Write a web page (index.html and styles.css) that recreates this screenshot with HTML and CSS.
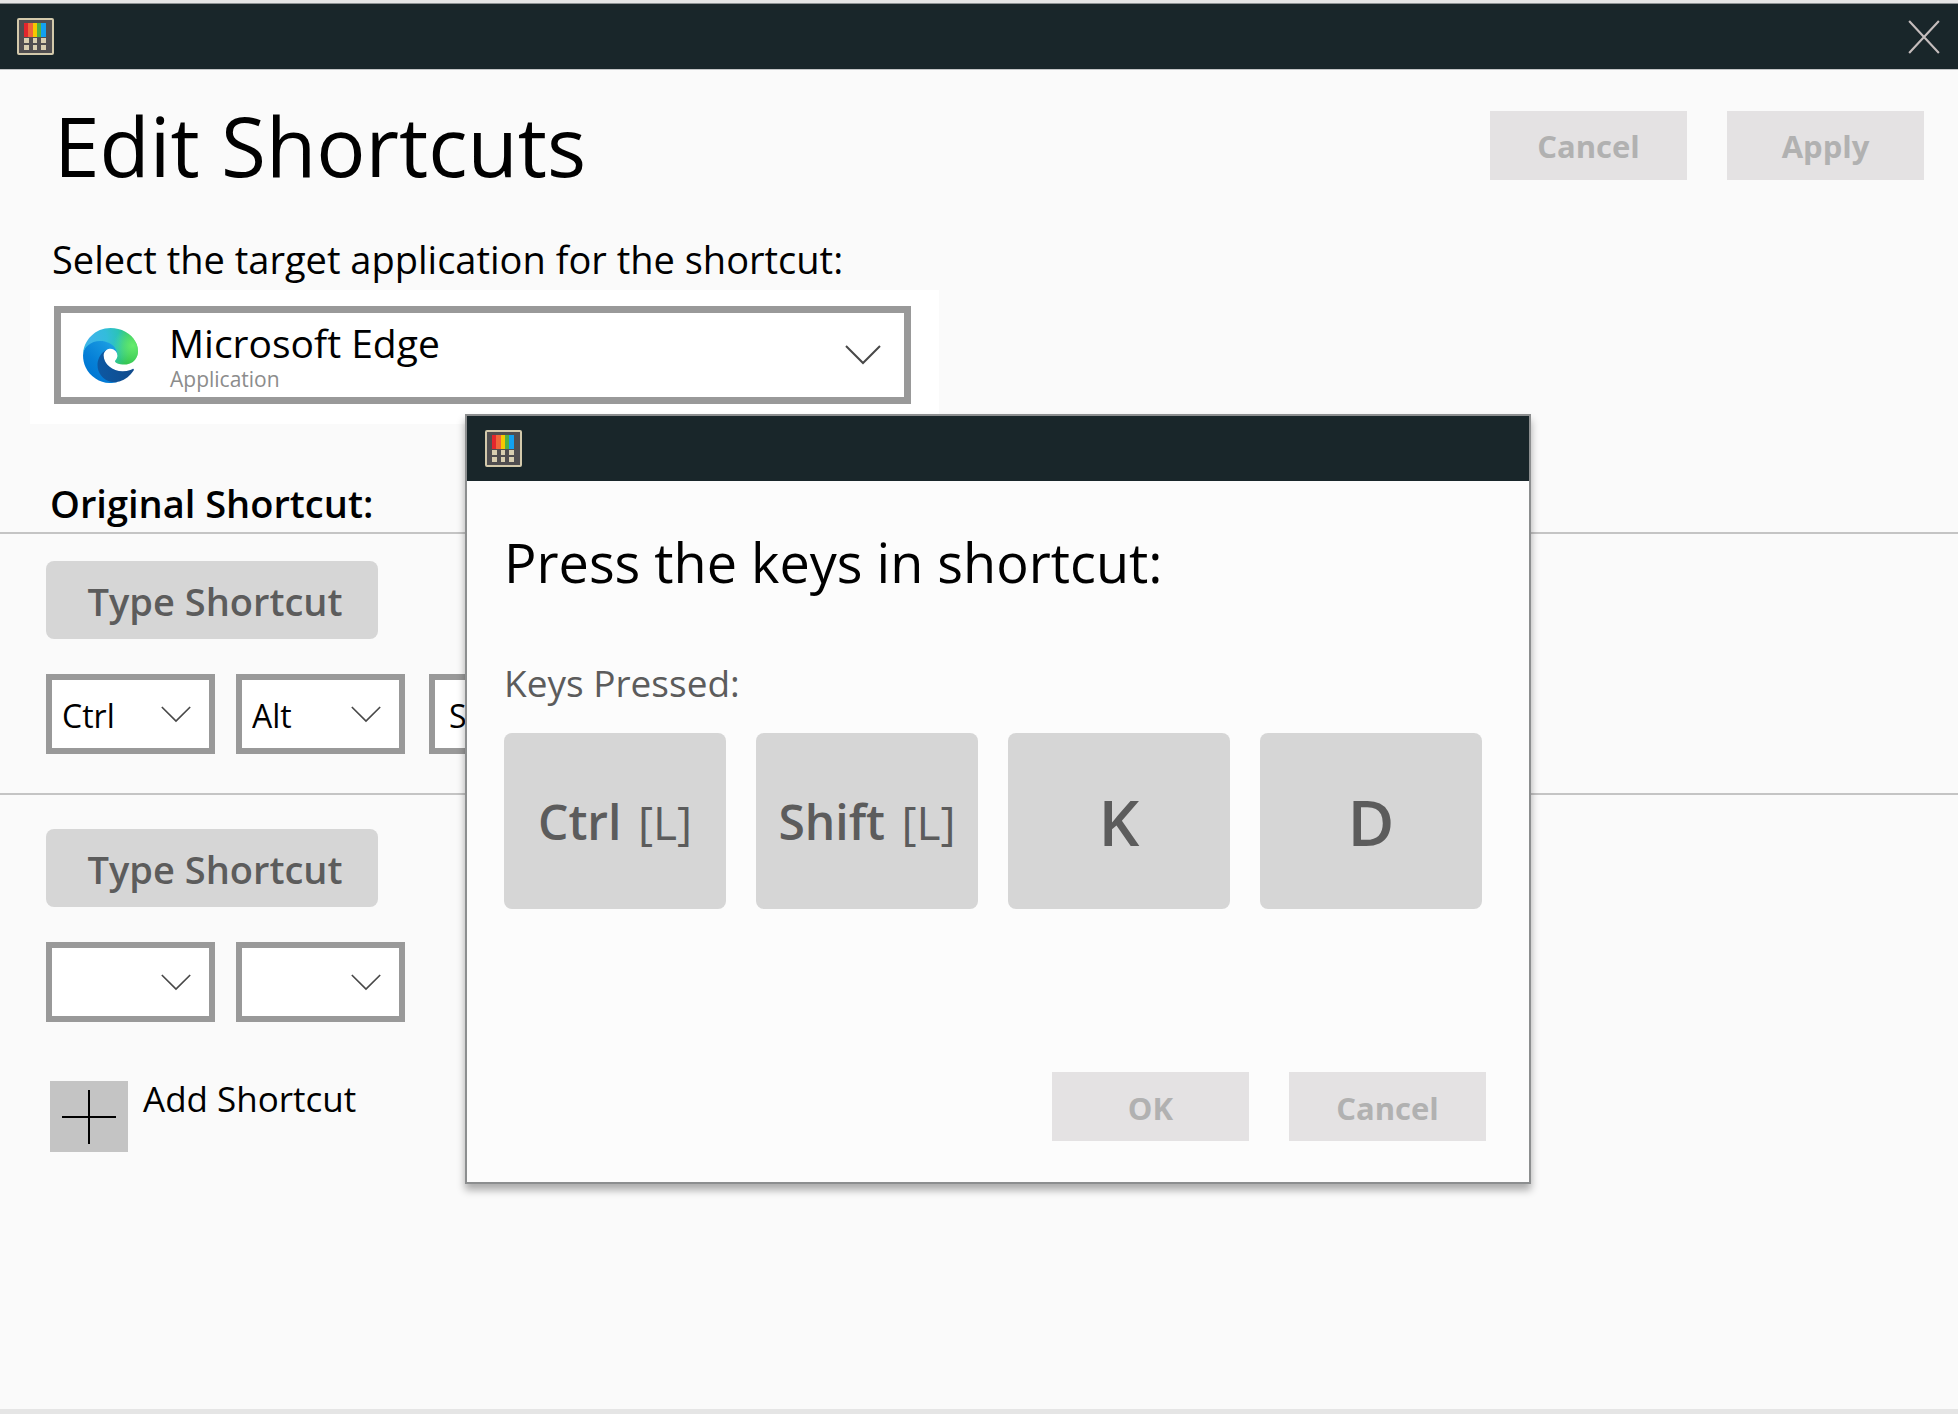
FILE: index.html
```html
<!DOCTYPE html>
<html lang="en">
<head>
<meta charset="utf-8">
<meta name="viewport" content="width=device-width, initial-scale=1">
<title>Edit Shortcuts</title>
<link rel="stylesheet" href="styles.css">
</head>
<body>
<svg class="defs" aria-hidden="true">
  <symbol id="app-icon" viewBox="0 0 37 37">
    <rect x="1" y="1" width="35" height="35" rx="1" fill="#504e50" stroke="#d3c9ab" stroke-width="2"/>
    <rect x="7" y="5" width="5" height="14" fill="#e3262d"/>
    <rect x="11" y="5" width="5" height="14" fill="#f0663a"/>
    <rect x="16" y="5" width="4" height="14" fill="#f6c800"/>
    <rect x="20" y="5" width="5" height="14" fill="#52b043"/>
    <rect x="24" y="5" width="5" height="14" fill="#12a1f0"/>
    <path fill="#d8ceb0" d="M7 20h5v5H7zM16 20h4v5h-4zM24 20h5v5h-5zM7 27h5v5H7zM16 27h4v5h-4zM24 27h5v5h-5z"/>
  </symbol>
  <symbol id="chevron" viewBox="0 0 36 20">
    <path d="M1 1 18 18 35 1" fill="none" stroke="#484848" stroke-width="2"/>
  </symbol>
</svg>

<div class="window">
  <header class="titlebar">
    <svg class="app-icon" aria-hidden="true"><use href="#app-icon"/></svg>
    <button class="close" type="button" aria-label="Close">
      <svg viewBox="0 0 30 32" aria-hidden="true"><path d="M1 1 29 31M29 1 1 31" fill="none" stroke="#c4bcbc" stroke-width="2"/></svg>
    </button>
  </header>

  <main>
    <div class="page-head">
      <h1>Edit Shortcuts</h1>
      <div class="actions">
        <button class="action" type="button">Cancel</button>
        <button class="action" type="button">Apply</button>
      </div>
    </div>

    <label class="target-label" for="target">Select the target application for the shortcut:</label>
    <div class="target-panel">
      <div class="target">
        <select id="target"><option>Microsoft Edge</option></select>
        <svg class="edge-icon" viewBox="0 0 256 256" aria-hidden="true">
          <defs>
            <linearGradient id="edge-a" x1="63" y1="177" x2="241" y2="177" gradientUnits="userSpaceOnUse"><stop offset="0" stop-color="#0c59a4"/><stop offset="1" stop-color="#114a8b"/></linearGradient>
            <linearGradient id="edge-b" x1="152" y1="98" x2="44" y2="215" gradientUnits="userSpaceOnUse"><stop offset="0" stop-color="#1b9de2"/><stop offset=".16" stop-color="#1595df"/><stop offset=".67" stop-color="#0680d7"/><stop offset="1" stop-color="#0078d4"/></linearGradient>
            <radialGradient id="edge-c" cx="26" cy="46" r="202" gradientTransform="matrix(1 .2 -.2 1 10 0)" gradientUnits="userSpaceOnUse"><stop offset="0" stop-color="#3fb4ea"/><stop offset=".4" stop-color="#33bcdc"/><stop offset=".68" stop-color="#2bc3b8"/><stop offset="1" stop-color="#36c752"/></radialGradient>
            <radialGradient id="edge-d" cx="232" cy="82" r="90" gradientUnits="userSpaceOnUse"><stop offset="0" stop-color="#66eb6e"/><stop offset="1" stop-color="#66eb6e" stop-opacity="0"/></radialGradient>
          </defs>
          <path fill="url(#edge-a)" d="M231 190.500c-3.400 1.800-6.900 3.400-10.500 4.700-11.500 4.300-23.600 6.500-35.900 6.500-47.300 0-88.500-32.500-88.500-74.300.1-11.400 6.400-21.900 16.400-27.300-42.800 1.800-53.800 46.400-53.800 72.500 0 73.900 68.100 81.400 82.800 81.400 7.900 0 19.800-2.300 27-4.600l1.300-.4c27.600-9.500 51-28.100 66.600-52.800 1.200-1.900.6-4.300-1.200-5.500-1.300-.8-2.900-.9-4.200-.2z"/>
          <path fill="url(#edge-b)" d="M105.700 241.400c-8.900-5.500-16.600-12.800-22.700-21.300-26.300-36-18.400-86.500 17.600-112.800 3.800-2.700 7.700-5.200 11.900-7.200 3.100-1.500 8.400-4.100 15.500-4 10.100.1 19.600 4.900 25.700 13 4 5.400 6.300 11.900 6.400 18.700 0-.2 24.500-79.600-80-79.600-43.900 0-80 41.700-80 78.200-.2 19.300 4 38.500 12.100 56 27.600 58.800 94.800 87.600 156.400 67.100-21.100 6.600-44.100 3.700-62.900-8.100z"/>
          <path fill="url(#edge-c)" d="M152.300 148.900c-.9 1-3.400 2.500-3.400 5.600 0 2.600 1.700 5.200 4.800 7.300 14.300 10 41.400 8.600 41.500 8.600 10.700 0 21.100-2.900 30.300-8.300 18.800-11 30.400-31.100 30.400-52.900.3-22.400-8-37.300-11.300-43.900C223.500 23.900 177.700 0 128 0 58 0 1 56.200 0 126.200c.5-36.500 36.800-66 80-66 3.500 0 23.500.3 42 10.100 16.300 8.600 24.900 18.900 30.800 29.200 6.200 10.700 7.300 24.100 7.300 29.500 0 5.300-2.700 13.300-7.800 19.900z"/>
          <path fill="url(#edge-d)" d="M152.300 148.900c-.9 1-3.400 2.500-3.400 5.600 0 2.600 1.700 5.200 4.800 7.300 14.300 10 41.400 8.600 41.500 8.600 10.700 0 21.100-2.900 30.300-8.300 18.800-11 30.400-31.100 30.400-52.900.3-22.400-8-37.300-11.300-43.900C223.500 23.900 177.700 0 128 0 58 0 1 56.200 0 126.200c.5-36.500 36.800-66 80-66 3.500 0 23.500.3 42 10.100 16.300 8.600 24.900 18.900 30.800 29.200 6.200 10.700 7.300 24.100 7.300 29.500 0 5.300-2.700 13.300-7.800 19.900z"/>
        </svg>
        <span class="target-kind">Application</span>
        <svg class="target-chevron" aria-hidden="true"><use href="#chevron"/></svg>
      </div>
    </div>

    <h2>Original Shortcut:</h2>
    <section class="shortcut">
      <button class="type" type="button">Type Shortcut</button>
      <div class="combo">
        <div class="key-select"><select aria-label="First key"><option>Ctrl</option></select><svg aria-hidden="true"><use href="#chevron"/></svg></div>
        <div class="key-select"><select aria-label="Second key"><option>Alt</option></select><svg aria-hidden="true"><use href="#chevron"/></svg></div>
        <div class="key-select key-select-last"><select aria-label="Third key"><option>Shift</option></select><svg aria-hidden="true"><use href="#chevron"/></svg></div>
      </div>
    </section>
    <section class="shortcut shortcut-new">
      <button class="type" type="button">Type Shortcut</button>
      <div class="combo">
        <div class="key-select"><select aria-label="New first key"><option></option></select><svg aria-hidden="true"><use href="#chevron"/></svg></div>
        <div class="key-select"><select aria-label="New second key"><option></option></select><svg aria-hidden="true"><use href="#chevron"/></svg></div>
      </div>
    </section>
    <button class="add" type="button">
      <span class="add-box"><svg viewBox="0 0 54 54" aria-hidden="true"><path d="M0 27H54M27 0V54" stroke="#000" stroke-width="2"/></svg></span>
      <span>Add Shortcut</span>
    </button>
  </main>

  <div class="dialog" role="dialog" aria-labelledby="dialog-title">
    <div class="dialog-bar">
      <svg class="app-icon" aria-hidden="true"><use href="#app-icon"/></svg>
    </div>
    <div class="dialog-body">
      <h2 class="dialog-title" id="dialog-title">Press the keys in shortcut:</h2>
      <p class="pressed">Keys Pressed:</p>
      <div class="keys">
        <div class="key"><span><b>Ctrl</b> <span class="side">[L]</span></span></div>
        <div class="key"><span><b>Shift</b> <span class="side">[L]</span></span></div>
        <div class="key key-letter"><b>K</b></div>
        <div class="key key-letter"><b>D</b></div>
      </div>
      <div class="actions">
        <button class="action" type="button">OK</button>
        <button class="action" type="button">Cancel</button>
      </div>
    </div>
  </div>
</div>
</body>
</html>
```
FILE: styles.css
```css
* {
  box-sizing: border-box;
}

body,
h1,
h2,
p {
  margin: 0;
}

body,
button,
select {
  font-family: "Open Sans", "Noto Sans", sans-serif;
}

body {
  background: #fafafa;
  color: #000;
}

button,
select {
  margin: 0;
  padding: 0;
  border: 0;
  border-radius: 0;
  appearance: none;
  color: inherit;
  opacity: 1;
}

.defs {
  display: block;
  width: 0;
  height: 0;
}

.window {
  position: relative;
  min-height: 100vh;
  border-top: 3px solid #e5e5e5;
  border-bottom: 5px solid #e5e5e5;
}

.titlebar,
.dialog-bar {
  display: flex;
  align-items: center;
  justify-content: space-between;
  background: #19262a;
}

.titlebar {
  height: 67px;
  padding: 0 18px 0 17px;
  border-top: 1px solid #8d9294;
  border-bottom: 1px solid #c2c5c6;
}

.app-icon {
  width: 37px;
  height: 37px;
}

.close {
  display: flex;
  background: none;
}

.close svg {
  width: 32px;
  height: 34px;
}

.page-head {
  display: flex;
  align-items: center;
  justify-content: space-between;
  padding: 25px 34px 0 54px;
}

h1 {
  font-size: 82px;
  font-weight: 400;
  line-height: 100px;
}

.actions {
  display: flex;
  justify-content: flex-end;
  gap: 40px;
}

.action {
  width: 197px;
  height: 69px;
  padding-top: 2px;
  background: #e4e2e3;
  color: #b1b1b1;
  font-size: 31px;
  font-weight: 700;
}

.target-label {
  display: block;
  margin: 37px 0 4px;
  padding-left: 52px;
  font-size: 38px;
  line-height: 54px;
}

.target-panel {
  width: 909px;
  max-width: 100%;
  margin-left: 30px;
  padding: 16px 28px 20px 24px;
  background: #fff;
}

.target {
  display: grid;
  grid-template-columns: 29px 55px 32px 1fr 36px 30px;
  grid-template-rows: 98px;
}

.target select {
  grid-area: 1 / 1 / 2 / -1;
  padding: 0 90px 25px 108px;
  border: 7px solid #999;
  background: #fff;
  font-size: 39px;
}

.edge-icon {
  grid-area: 1 / 2;
  align-self: center;
  width: 55px;
  height: 55px;
  pointer-events: none;
}

.target-kind {
  grid-area: 1 / 4;
  align-self: end;
  padding-bottom: 10px;
  color: #8c8c8c;
  font-size: 21px;
  line-height: 30px;
  pointer-events: none;
}

.target-chevron {
  grid-area: 1 / 5;
  align-self: center;
  width: 36px;
  height: 20px;
  pointer-events: none;
}

h2 {
  padding: 53px 0 3px 50px;
  font-size: 38px;
  font-weight: 600;
  line-height: 52px;
}

.shortcut {
  display: flex;
  flex-direction: column;
  align-items: flex-start;
  gap: 35px;
  padding: 27px 46px 39px;
  border-top: 2px solid #c4c4c4;
}

.shortcut-new {
  padding: 34px 46px 59px;
}

.type {
  width: 332px;
  height: 78px;
  padding: 2px 0 0 6px;
  border-radius: 8px;
  background: #d6d6d6;
  color: #5c5c5c;
  font-size: 38px;
  font-weight: 600;
}

.combo {
  display: flex;
  gap: 21px;
}

.key-select {
  display: grid;
  grid-template-columns: 1fr 30px 24px;
  width: 169px;
  height: 80px;
}

.key-select select {
  grid-area: 1 / 1 / 2 / -1;
  padding: 2px 60px 0 10px;
  border: 6px solid #999;
  background: #fff;
  font-size: 32px;
}

.key-select svg {
  grid-area: 1 / 2;
  align-self: center;
  width: 30px;
  height: 17px;
  pointer-events: none;
}

.key-select-last {
  width: 180px;
  margin-left: 3px;
}

.key-select-last select {
  padding-left: 14px;
}

.add {
  display: flex;
  align-items: flex-start;
  gap: 15px;
  margin-left: 50px;
  background: none;
  font-size: 35px;
  line-height: 36px;
}

.add-box {
  display: grid;
  place-items: center;
  width: 78px;
  height: 71px;
  background: #c4c4c4;
}

.add-box svg {
  width: 54px;
  height: 54px;
}

/* The key capture window floats over the editor. */
.dialog {
  position: absolute;
  top: 411px;
  left: 465px;
  right: 427px;
  border: 2px solid #8c8e8f;
  background: #fcfcfc;
  box-shadow: 0 6px 8px rgba(0, 0, 0, 0.32);
}

.dialog-bar {
  height: 65px;
  padding-left: 18px;
}

.dialog-body {
  padding: 43px 43px 41px 37px;
}

.dialog-title {
  padding: 0;
  font-size: 54px;
  font-weight: 400;
  line-height: 76px;
}

.pressed {
  margin: 57px 0 24px;
  color: #5c5c5c;
  font-size: 37px;
  line-height: 52px;
}

.keys {
  display: grid;
  grid-template-columns: repeat(4, 1fr);
  gap: 30px;
  margin-bottom: 163px;
  padding-right: 4px;
}

.key {
  display: grid;
  place-items: center;
  height: 176px;
  border-radius: 8px;
  background: #d6d6d6;
  color: #5c5c5c;
  font-size: 48px;
  white-space: nowrap;
}

.key b {
  font-weight: 600;
}

.side {
  margin-left: 4px;
  font-size: 46px;
}

.key-letter {
  font-size: 64px;
}
```
